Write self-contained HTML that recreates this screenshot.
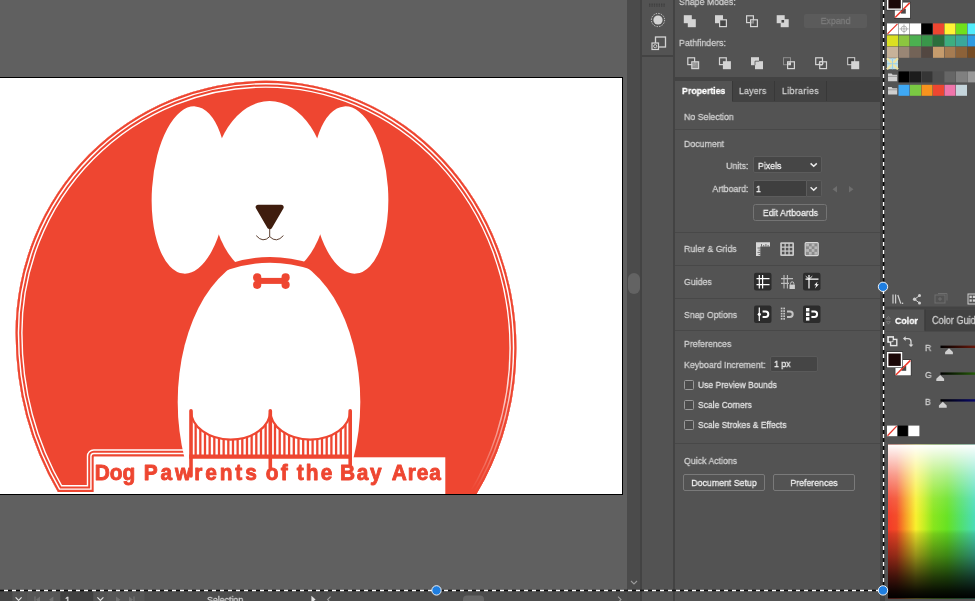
<!DOCTYPE html>
<html>
<head>
<meta charset="utf-8">
<title>Dog Pawrents of the Bay Area - Illustrator</title>
<style>
*{box-sizing:border-box;margin:0;padding:0}
html,body{width:975px;height:601px;overflow:hidden;background:#606060}
body{font-family:"Liberation Sans",sans-serif;font-size:9.6px;color:#d2d2d2;position:relative}
.abs{position:absolute}
#canvas{left:0;top:0;width:627px;height:591px;background:#606060;overflow:hidden}
#art{left:0;top:0;will-change:transform}
#vscroll{left:627px;top:0;width:13px;height:591px;background:#4b4b4b}
#vthumb{left:628px;top:273px;width:12px;height:21px;border-radius:6px;background:#636363}
#dock{left:640px;top:0;width:35px;height:601px;background:#535353;border-left:2px solid #434343;border-right:2px solid #434343}
#props{left:675px;top:0;width:205px;height:601px;background:#535353}
#gap{left:880px;top:0;width:5px;height:601px;background:#434343}
#right{left:885px;top:0;width:90px;height:601px;background:#535353;overflow:hidden}
#status{left:0;top:591px;width:640px;height:10px;background:#4d4d4d;overflow:hidden}
.t{position:absolute;white-space:nowrap;line-height:12px;will-change:transform;-webkit-text-stroke:.28px;transform:scaleX(.915);transform-origin:0 0}
.t[style*="text-align:right"]{transform-origin:100% 0}
.t[style*="text-align:center"]{transform-origin:50% 0}
.cb{left:9px;width:10px;height:10px;border:1px solid #9a9a9a;border-radius:1.5px;background:#4c4c4c}
.sep{position:absolute;left:0;width:205px;height:1px;background:#484848}
</style>
</head>
<body>
<!-- CANVAS -->
<div id="canvas" class="abs">
<svg id="art" class="abs" width="627" height="591" viewBox="0 0 627 591">
  <defs>
    <clipPath id="ab"><rect x="0" y="78" width="622" height="416"/></clipPath>
    <path id="ring" d="M 57.90 492.0 L 93.8 492.0 L 93.8 456.3 L 200 456.3 L 200 530 L 462.46 530 L 462.46 515 A 250.5 269.4 0 0 0 516.40 348 A 250.5 267.2 0 0 0 265.9 80.80 A 250.3 252 0 0 0 15.60 332.8 A 250.3 286.2 0 0 0 57.90 492.0 Z"/>
    <clipPath id="ringclip"><use href="#ring"/></clipPath>
    <linearGradient id="fade" gradientUnits="userSpaceOnUse" x1="520" y1="360" x2="470" y2="490"><stop offset="0" stop-color="#ee4631" stop-opacity="0"/><stop offset="0.55" stop-color="#ee4631" stop-opacity="0.55"/><stop offset="1" stop-color="#ee4631" stop-opacity="1"/></linearGradient>
  </defs>
  <!-- artboard -->
  <rect x="-2" y="77" width="625" height="418" fill="#000"/>
  <rect x="0" y="78" width="622" height="416" fill="#fff"/>
  <g clip-path="url(#ab)">
    <use href="#ring" fill="#ee4631"/>
    <g clip-path="url(#ringclip)" fill="none" stroke-linejoin="round">
      <use href="#ring" stroke="#fff" stroke-width="14"/>
      <use href="#ring" stroke="#ee4631" stroke-width="11.2"/>
      <use href="#ring" stroke="#fff" stroke-width="7.2"/>
      <use href="#ring" stroke="#ee4631" stroke-width="4.3"/>
      <rect x="400" y="345" width="130" height="160" fill="url(#fade)" stroke="none"/>
    </g>
    <!-- ears + head -->
    <ellipse cx="189.5" cy="190" rx="37.5" ry="83.8" fill="#fff" transform="rotate(4 189.5 190)"/>
    <ellipse cx="350" cy="190" rx="38" ry="83.8" fill="#fff" transform="rotate(-4 350 190)"/>
    <ellipse cx="269.5" cy="190" rx="58.6" ry="89" fill="#fff"/>
    <!-- body -->
    <ellipse cx="269" cy="402" rx="91.3" ry="148" fill="#fff"/>
    <!-- collar -->
    <path d="M 228 264 Q 270 250.2 312 264 L 312 269.8 Q 270 255.6 228 269.8 Z" fill="#ee4631"/>
    <!-- nose -->
    <path d="M 258.3 207.3 L 281.1 207.3 L 269.7 226.6 Z" fill="#3f1d0e" stroke="#3f1d0e" stroke-width="5.2" stroke-linejoin="round"/>
    <path d="M 269.7 228 V 236.6 M 256.2 235.6 Q 263 243.5 269.7 236.6 Q 276.4 243.5 283.4 235.6" fill="none" stroke="#4a2a1a" stroke-width="0.9"/>
    <!-- bone -->
    <g fill="#ee4631">
      <rect x="257" y="277.9" width="29" height="6"/>
      <circle cx="257.2" cy="277.4" r="4.1"/><circle cx="257.2" cy="284.8" r="4.1"/>
      <circle cx="285.6" cy="277.4" r="4.1"/><circle cx="285.6" cy="284.8" r="4.1"/>
    </g>
    <!-- text box -->
    <rect x="93.8" y="457.3" width="351.5" height="40" fill="#fff"/>
    <!-- bridge -->
    <g fill="none" stroke="#ee4631">
      <path d="M 195.66 424.46 V 456 M 200.33 429.43 V 456 M 204.99 432.81 V 456 M 209.66 435.26 V 456 M 214.32 437.06 V 456 M 218.99 438.33 V 456 M 223.65 439.15 V 456 M 228.32 439.55 V 456 M 232.98 439.55 V 456 M 237.65 439.15 V 456 M 242.31 438.33 V 456 M 246.98 437.06 V 456 M 251.64 435.26 V 456 M 256.31 432.81 V 456 M 260.97 429.43 V 456 M 265.64 424.46 V 456 M 275.00 424.46 V 456 M 279.70 429.43 V 456 M 284.40 432.81 V 456 M 289.10 435.26 V 456 M 293.80 437.06 V 456 M 298.50 438.33 V 456 M 303.20 439.15 V 456 M 307.90 439.55 V 456 M 312.60 439.55 V 456 M 317.30 439.15 V 456 M 322.00 438.33 V 456 M 326.70 437.06 V 456 M 331.40 435.26 V 456 M 336.10 432.81 V 456 M 340.80 429.43 V 456 M 345.50 424.46 V 456" stroke-width="2.3"/>
      <path d="M 191 411 A 39.65 28.6 0 0 0 270.3 411 M 270.3 411 A 39.95 28.6 0 0 0 350.2 411" stroke-width="2.2"/>
      <path d="M 191 410.7 V 476 M 270.3 410.7 V 468 M 350.2 410.7 V 465" stroke-width="3.6" stroke-linecap="round"/>
      <path d="M 189.2 456.7 H 352" stroke-width="4.2"/>
    </g>
    <!-- text -->
    <g fill="#ee4631" stroke="#ee4631" stroke-width="0.9" stroke-linejoin="round" font-family="Liberation Sans, sans-serif" font-weight="bold" font-size="22.7">
      <text transform="translate(94.80,479.7) scale(0.92,1)" letter-spacing="-0.02">Dog</text>
      <text transform="translate(143.80,479.7) scale(0.92,1)" letter-spacing="3.13">Pawrents</text>
      <text transform="translate(265.70,479.7) scale(0.92,1)" letter-spacing="2.48">of</text>
      <text transform="translate(296.80,479.7) scale(0.92,1)" letter-spacing="2.26">the</text>
      <text transform="translate(340.00,479.7) scale(0.92,1)" letter-spacing="1.83">Bay</text>
      <text transform="translate(391.70,479.7) scale(0.92,1)" letter-spacing="1.03">Area</text>
    </g>
  </g>
</svg>
</div>
<div id="vscroll" class="abs"></div>
<div id="vthumb" class="abs"></div>
<div id="dock" class="abs">
<svg class="abs" style="left:0;top:0" width="31" height="601" viewBox="0 0 31 601">
  <g fill="#3c3c3c"><rect x="7.0" y="3.6" width="1.4" height="1.2"/><rect x="9.4" y="3.6" width="1.4" height="1.2"/><rect x="11.8" y="3.6" width="1.4" height="1.2"/><rect x="14.2" y="3.6" width="1.4" height="1.2"/><rect x="16.6" y="3.6" width="1.4" height="1.2"/><rect x="19.0" y="3.6" width="1.4" height="1.2"/><rect x="21.4" y="3.6" width="1.4" height="1.2"/><rect x="7.0" y="5.4" width="1.4" height="1.2"/><rect x="9.4" y="5.4" width="1.4" height="1.2"/><rect x="11.8" y="5.4" width="1.4" height="1.2"/><rect x="14.2" y="5.4" width="1.4" height="1.2"/><rect x="16.6" y="5.4" width="1.4" height="1.2"/><rect x="19.0" y="5.4" width="1.4" height="1.2"/><rect x="21.4" y="5.4" width="1.4" height="1.2"/></g>
  <circle cx="16" cy="20" r="4.6" fill="#d4d4d4"/>
  <circle cx="16" cy="20" r="6.6" fill="none" stroke="#d4d4d4" stroke-width="1" stroke-dasharray="1.3 1.3"/>
  <rect x="13.5" y="37" width="10" height="10" fill="none" stroke="#d4d4d4" stroke-width="1.3"/>
  <rect x="10" y="43" width="6.5" height="6.5" fill="#535353" stroke="#d4d4d4" stroke-width="1.2"/>
  <circle cx="13.2" cy="46.2" r="1.6" fill="none" stroke="#d4d4d4" stroke-width="0.9"/>
  <rect x="0" y="55" width="31" height="2" fill="#434343"/>
</svg>
</div>
<div id="props" class="abs">
<div class="t" style="left:4px;top:-4px;color:#cfcfcf">Shape Modes:</div>
<div class="t" style="left:4px;top:37px;color:#cfcfcf">Pathfinders:</div>
<svg class="abs" style="left:0;top:0" width="205" height="80" viewBox="0 0 205 80"><rect x="8.80" y="15.20" width="8" height="8" fill="#d4d4d4"/><rect x="12.80" y="19.20" width="8" height="8" fill="#d4d4d4"/><rect x="40.00" y="15.20" width="8" height="8" fill="#d4d4d4"/><rect x="44.60" y="19.80" width="6.80" height="6.80" fill="#454545" stroke="#d4d4d4" stroke-width="1.2"/><rect x="71.60" y="15.80" width="6.80" height="6.80" fill="none" stroke="#d4d4d4" stroke-width="1.2"/><rect x="75.60" y="19.80" width="6.80" height="6.80" fill="none" stroke="#d4d4d4" stroke-width="1.2"/><rect x="76.2" y="20.4" width="2.8" height="2.8" fill="#8c8c8c"/><rect x="101.70" y="15.20" width="8" height="8" fill="#d4d4d4"/><rect x="105.70" y="19.20" width="8" height="8" fill="#d4d4d4"/><rect x="106.5" y="20.0" width="2.6" height="2.6" fill="#454545"/><rect x="12.80" y="57.80" width="6.80" height="6.80" fill="none" stroke="#d4d4d4" stroke-width="1.2"/><rect x="16.80" y="61.80" width="6.80" height="6.80" fill="#d4d4d4" stroke="#d4d4d4" stroke-width="1.2" fill-opacity="0.5"/><rect x="17.4" y="62.400000000000006" width="2.8" height="2.8" fill="#9c9c9c"/><rect x="44.50" y="57.80" width="6.80" height="6.80" fill="none" stroke="#d4d4d4" stroke-width="1.2"/><rect x="47.90" y="61.20" width="8" height="8" fill="#d4d4d4"/><rect x="76.00" y="57.20" width="8" height="8" fill="#d4d4d4"/><rect x="80.00" y="61.20" width="8" height="8" fill="#d4d4d4"/><path d="M 80 65.2 V 61.2 H 84" fill="none" stroke="#535353" stroke-width="0.8"/><rect x="108.50" y="57.70" width="7.00" height="7.00" fill="none" stroke="#8e8e8e" stroke-width="1"/><rect x="112.60" y="61.80" width="6.80" height="6.80" fill="none" stroke="#d4d4d4" stroke-width="1.2"/><rect x="113.2" y="62.400000000000006" width="2.8" height="2.8" fill="#d4d4d4"/><rect x="140.70" y="57.80" width="6.80" height="6.80" fill="none" stroke="#d4d4d4" stroke-width="1.2"/><rect x="144.70" y="61.80" width="6.80" height="6.80" fill="none" stroke="#d4d4d4" stroke-width="1.2"/><circle cx="146.1" cy="63.2" r="1.9" fill="none" stroke="#d4d4d4" stroke-width="1"/><rect x="172.70" y="57.70" width="7.00" height="7.00" fill="#3e3e3e" stroke="#d4d4d4" stroke-width="1"/><rect x="176.20" y="61.20" width="8" height="8" fill="#d4d4d4"/></svg>
<div class="abs" style="left:129px;top:14px;width:63px;height:14px;background:#5b5b5b;border-radius:2px"></div>
<div class="t" style="left:129px;top:15px;width:63px;text-align:center;color:#7d7d7d">Expand</div>
<div class="abs" style="left:0;top:77px;width:205px;height:4px;background:#434343"></div>
<div class="abs" style="left:0;top:81px;width:205px;height:21px;background:#424242"></div>
<div class="abs" style="left:0;top:81px;width:57px;height:21px;background:#535353"></div>
<div class="abs" style="left:57px;top:81px;width:1px;height:20px;background:#383838"></div>
<div class="abs" style="left:99px;top:81px;width:1px;height:20px;background:#383838"></div>
<div class="abs" style="left:151px;top:81px;width:1px;height:20px;background:#383838"></div>
<div class="t" style="left:7px;top:85px;color:#fff;font-weight:bold">Properties</div>
<div class="t" style="left:64px;top:85px;color:#cdcdcd;letter-spacing:.2px">Layers</div>
<div class="t" style="left:107px;top:85px;color:#cdcdcd;letter-spacing:.4px">Libraries</div>

<div class="t" style="left:8.5px;top:110.5px">No Selection</div>
<div class="sep" style="top:129px"></div>
<div class="t" style="left:8.5px;top:137.5px">Document</div>
<div class="t" style="left:20px;width:53.5px;text-align:right;top:159.5px">Units:</div>
<div class="abs" style="left:77.8px;top:156.4px;width:68.8px;height:17px;background:#464646;border:1px solid #5c5c5c;border-radius:2px"></div>
<div class="t" style="left:82.6px;top:159.5px;color:#f4f4f4">Pixels</div>
<div class="t" style="left:20px;width:53.5px;text-align:right;top:183px">Artboard:</div>
<div class="abs" style="left:77.8px;top:180.4px;width:54.2px;height:16.6px;background:#3f3f3f;border:1px solid #5c5c5c;border-radius:2px 0 0 2px"></div>
<div class="abs" style="left:131.5px;top:180.4px;width:15.1px;height:16.6px;background:#4a4a4a;border:1px solid #5c5c5c;border-left:none;border-radius:0 2px 2px 0"></div>
<div class="t" style="left:81.4px;top:183px;color:#f4f4f4">1</div>
<div class="abs" style="left:77.8px;top:204px;width:73.8px;height:17px;border:1px solid #747474;border-radius:2.5px"></div>
<div class="t" style="left:78.5px;width:73px;text-align:center;top:206.5px;color:#f0f0f0">Edit Artboards</div>
<div class="sep" style="top:232px"></div>
<div class="t" style="left:8.5px;top:243px">Ruler &amp; Grids</div>
<div class="sep" style="top:265px"></div>
<div class="t" style="left:8.5px;top:275.5px">Guides</div>
<div class="sep" style="top:298px"></div>
<div class="t" style="left:8.5px;top:308.5px">Snap Options</div>
<div class="sep" style="top:330px"></div>
<div class="t" style="left:8.5px;top:338px">Preferences</div>
<div class="t" style="left:8.5px;top:359px">Keyboard Increment:</div>
<div class="abs" style="left:94.7px;top:356px;width:48px;height:16px;background:#454545;border:1px solid #5a5a5a;border-radius:2px"></div>
<div class="t" style="left:98.5px;top:358px;color:#f0f0f0">1 px</div>
<div class="abs cb" style="top:380px"></div><div class="t" style="left:23px;top:379px;color:#e2e2e2;transform:scaleX(.885)">Use Preview Bounds</div>
<div class="abs cb" style="top:400px"></div><div class="t" style="left:23px;top:398.5px;color:#e2e2e2;transform:scaleX(.885)">Scale Corners</div>
<div class="abs cb" style="top:419.5px"></div><div class="t" style="left:23px;top:418.5px;color:#e2e2e2;transform:scaleX(.885)">Scale Strokes &amp; Effects</div>
<div class="sep" style="top:443px"></div>
<div class="t" style="left:8.5px;top:454.5px">Quick Actions</div>
<div class="abs" style="left:8px;top:474px;width:82px;height:17px;border:1px solid #7a7a7a;border-radius:2px"></div>
<div class="t" style="left:8px;width:82px;text-align:center;top:476.5px;color:#f0f0f0">Document Setup</div>
<div class="abs" style="left:98.3px;top:474px;width:82px;height:17px;border:1px solid #7a7a7a;border-radius:2px"></div>
<div class="t" style="left:98.3px;width:82px;text-align:center;top:476.5px;color:#f0f0f0">Preferences</div>
<svg id="picons" class="abs" style="left:0;top:0" width="205" height="601" viewBox="0 0 205 601"><path d="M 135.6 163.4 l 3.1 2.9 l 3.1 -2.9" fill="none" stroke="#ececec" stroke-width="1.5"/><path d="M 135.6 187.3 l 3.1 2.9 l 3.1 -2.9" fill="none" stroke="#ececec" stroke-width="1.5"/><path d="M 162 186 l -4.5 3.2 l 4.5 3.2 Z" fill="#6e6e6e"/><path d="M 174 186 l 4.5 3.2 l -4.5 3.2 Z" fill="#6e6e6e"/><path d="M 81 242.3 H 95 V 246.6 H 85.3 V 256 H 81 Z" fill="#d8d8d8"/><g stroke="#535353" stroke-width="0.8"><path d="M 86.5 244 v 2.6 M 88.7 245 v 1.6 M 90.9 244 v 2.6 M 93.1 245 v 1.6 M 82.5 248 h 2.8 M 83.5 250.2 h 1.8 M 82.5 252.4 h 2.8 M 83.5 254.6 h 1.8"/></g><rect x="105.2" y="242.2" width="13.8" height="13.8" rx="1.2" fill="#c9c9c9"/><rect x="106.90" y="243.90" width="2.6" height="2.6" fill="#505050"/><rect x="106.90" y="247.80" width="2.6" height="2.6" fill="#505050"/><rect x="106.90" y="251.70" width="2.6" height="2.6" fill="#505050"/><rect x="110.80" y="243.90" width="2.6" height="2.6" fill="#505050"/><rect x="110.80" y="247.80" width="2.6" height="2.6" fill="#505050"/><rect x="110.80" y="251.70" width="2.6" height="2.6" fill="#505050"/><rect x="114.70" y="243.90" width="2.6" height="2.6" fill="#505050"/><rect x="114.70" y="247.80" width="2.6" height="2.6" fill="#505050"/><rect x="114.70" y="251.70" width="2.6" height="2.6" fill="#505050"/><rect x="130.2" y="242.6" width="13" height="13" fill="#8b8b8b" stroke="#d8d8d8" stroke-width="1.2" rx="1"/><rect x="131.20" y="243.60" width="2.75" height="2.75" fill="#b9b9b9"/><rect x="131.20" y="249.10" width="2.75" height="2.75" fill="#b9b9b9"/><rect x="133.95" y="246.35" width="2.75" height="2.75" fill="#b9b9b9"/><rect x="133.95" y="251.85" width="2.75" height="2.75" fill="#b9b9b9"/><rect x="136.70" y="243.60" width="2.75" height="2.75" fill="#b9b9b9"/><rect x="136.70" y="249.10" width="2.75" height="2.75" fill="#b9b9b9"/><rect x="139.45" y="246.35" width="2.75" height="2.75" fill="#b9b9b9"/><rect x="139.45" y="251.85" width="2.75" height="2.75" fill="#b9b9b9"/><rect x="79" y="272.8" width="17.5" height="17.6" rx="2" fill="#2c2c2c"/><path d="M 84.3 275 v 13.5 M 87.6 275 v 13.5" stroke="#fff" stroke-width="1.2"/><path d="M 81.5 278.6 h 13 M 81.5 284.6 h 13" stroke="#fff" stroke-width="1.2"/><path d="M 109 275 v 13.5 M 112.4 275 v 13.5 M 106 278.6 h 12 M 106 283.4 h 8" stroke="#bdbdbd" stroke-width="1.1"/><rect x="114.5" y="284.6" width="5.4" height="4.4" fill="#d0d0d0"/><path d="M 115.6 284.6 v -1.2 a 1.6 1.6 0 0 1 3.2 0 v 1.2" fill="none" stroke="#d0d0d0" stroke-width="0.9"/><rect x="128" y="272.8" width="17.5" height="17.6" rx="2" fill="#2c2c2c"/><path d="M 134 275 v 13.5 M 130.5 279.2 h 13" stroke="#fff" stroke-width="1.2"/><path d="M 130.7 276.2 l 3.3 3 M 137.3 276.2 l -3.3 3" stroke="#fff" stroke-width="0.9"/><path d="M 142.6 281.6 l -3.4 3.6 h 2 l -1.2 3.4 l 3.8 -4.4 h -2.2 Z" fill="#fff"/><rect x="79" y="305.5" width="17.5" height="17.6" rx="2" fill="#2c2c2c"/><path d="M 84.3 307.5 v 13.5" stroke="#fff" stroke-width="1.2"/><circle cx="84.3" cy="314.3" r="1.6" fill="#fff"/><path d="M 87.6 311.6 h 3 a 2.7 2.7 0 0 1 0 5.4 h -3" fill="none" stroke="#fff" stroke-width="2"/><g fill="#c4c4c4"><rect x="105.8" y="307.6" width="1.7" height="1.7"/><rect x="108.3" y="307.6" width="1.7" height="1.7"/><rect x="105.8" y="310.2" width="1.7" height="1.7"/><rect x="108.3" y="310.2" width="1.7" height="1.7"/><rect x="105.8" y="312.8" width="1.7" height="1.7"/><rect x="108.3" y="312.8" width="1.7" height="1.7"/><rect x="105.8" y="315.4" width="1.7" height="1.7"/><rect x="108.3" y="315.4" width="1.7" height="1.7"/><rect x="105.8" y="318" width="1.7" height="1.7"/><rect x="108.3" y="318" width="1.7" height="1.7"/></g><path d="M 112 311.6 h 3 a 2.7 2.7 0 0 1 0 5.4 h -3" fill="none" stroke="#c4c4c4" stroke-width="2"/><rect x="128" y="305.5" width="17.5" height="17.6" rx="2" fill="#2c2c2c"/><rect x="131" y="308" width="3.4" height="3.4" fill="#fff"/><rect x="131" y="312.6" width="3.4" height="3.4" fill="#fff"/><rect x="131" y="317.2" width="3.4" height="3.4" fill="#fff"/><path d="M 136.4 311.6 h 3 a 2.7 2.7 0 0 1 0 5.4 h -3" fill="none" stroke="#fff" stroke-width="2"/></svg>
</div>
<div id="gap" class="abs"></div>
<div id="right" class="abs">
<svg class="abs" style="left:0;top:0" width="90" height="601" viewBox="0 0 90 601"><rect x="9" y="1.8" width="16.8" height="16.8" fill="#2e2e2e"/><rect x="9.7" y="2.5" width="15.4" height="15.4" fill="#fff"/><rect x="16" y="8.8" width="4.8" height="4.8" fill="#4a4a4a"/><path d="M 10.1 17.5 L 24.7 2.9" stroke="#ee3a2c" stroke-width="1.5"/><rect x="1.3" y="-6" width="16.6" height="16.4" fill="#2e2e2e"/><rect x="1.9" y="-6" width="15.4" height="15.8" fill="#fff"/><rect x="3.4" y="-6" width="12.4" height="14.5" fill="#1b0808"/><rect x="2.0" y="23.4" width="11" height="11" fill="#fff"/><path d="M 2.5 33.9 L 12.5 23.9" stroke="#e8352a" stroke-width="1.3"/><rect x="13.5" y="23.4" width="11" height="11" fill="#fff"/><circle cx="19.0" cy="28.9" r="2.8" fill="none" stroke="#999" stroke-width="0.7"/><path d="M 19.0 24.4 v 9 M 14.5 28.9 h 9" stroke="#999" stroke-width="0.7"/><rect x="25.0" y="23.4" width="11" height="11" fill="#ffffff"/><rect x="36.5" y="23.4" width="11" height="11" fill="#000000"/><rect x="48.0" y="23.4" width="11" height="11" fill="#ee4631"/><rect x="59.5" y="23.4" width="11" height="11" fill="#fff335"/><rect x="71.0" y="23.4" width="11" height="11" fill="#70e01c"/><rect x="82.5" y="23.4" width="11" height="11" fill="#52ecfb"/><rect x="2.0" y="35.4" width="11" height="11" fill="#dbe021"/><rect x="13.5" y="35.4" width="11" height="11" fill="#8cc63f"/><rect x="25.0" y="35.4" width="11" height="11" fill="#4cb050"/><rect x="36.5" y="35.4" width="11" height="11" fill="#39964a"/><rect x="48.0" y="35.4" width="11" height="11" fill="#2b6e3c"/><rect x="59.5" y="35.4" width="11" height="11" fill="#3dae80"/><rect x="71.0" y="35.4" width="11" height="11" fill="#3aa79b"/><rect x="82.5" y="35.4" width="11" height="11" fill="#2e9be2"/><rect x="2.0" y="46.8" width="11" height="11" fill="#c7b299"/><rect x="13.5" y="46.8" width="11" height="11" fill="#998675"/><rect x="25.0" y="46.8" width="11" height="11" fill="#736357"/><rect x="36.5" y="46.8" width="11" height="11" fill="#534741"/><rect x="48.0" y="46.8" width="11" height="11" fill="#c69c6d"/><rect x="59.5" y="46.8" width="11" height="11" fill="#a67c52"/><rect x="71.0" y="46.8" width="11" height="11" fill="#8c6239"/><rect x="82.5" y="46.8" width="11" height="11" fill="#754c24"/><rect x="2.0" y="58.2" width="11" height="11" fill="#bfe0ea"/><path d="M 2.0 58.2 l 11 11 M 13.0 58.2 l -11 11" stroke="#efe3a0" stroke-width="2.2"/><path d="M 7.5 58.2 v 11 M 2.0 63.7 h 11" stroke="#9fd0e2" stroke-width="1"/><path d="M 3.0 73.60000000000001 h 3.6 l 1 1.2 h 4.6 v 6.4 h -9.2 Z" fill="#cfcfcf"/><path d="M 3.0 76.4 h 9.2" stroke="#8a8a8a" stroke-width="0.7"/><rect x="13.5" y="71.4" width="11" height="11" fill="#000000"/><rect x="25.0" y="71.4" width="11" height="11" fill="#1c1c1c"/><rect x="36.5" y="71.4" width="11" height="11" fill="#363636"/><rect x="48.0" y="71.4" width="11" height="11" fill="#4f4f4f"/><rect x="59.5" y="71.4" width="11" height="11" fill="#666666"/><rect x="71.0" y="71.4" width="11" height="11" fill="#808080"/><rect x="82.5" y="71.4" width="11" height="11" fill="#999999"/><path d="M 3.0 87.0 h 3.6 l 1 1.2 h 4.6 v 6.4 h -9.2 Z" fill="#cfcfcf"/><path d="M 3.0 89.8 h 9.2" stroke="#8a8a8a" stroke-width="0.7"/><rect x="13.5" y="84.8" width="11" height="11" fill="#3fa9f5"/><rect x="25.0" y="84.8" width="11" height="11" fill="#7ac943"/><rect x="36.5" y="84.8" width="11" height="11" fill="#f7931e"/><rect x="48.0" y="84.8" width="11" height="11" fill="#ee4631"/><rect x="59.5" y="84.8" width="11" height="11" fill="#f075ab"/><rect x="71.0" y="84.8" width="11" height="11" fill="#c5d5dc"/><g stroke="#cfcfcf" fill="none" stroke-width="1.2"><path d="M 8 294.5 v 9 M 10.6 294.5 v 9 M 12.8 295 l 3 8.5"/></g><rect x="16.8" y="302.6" width="1.4" height="1.4" fill="#cfcfcf"/><g fill="#cfcfcf"><circle cx="29.6" cy="299.3" r="1.7"/><circle cx="34.5" cy="295.6" r="1.5"/><circle cx="34.5" cy="303" r="1.5"/></g><path d="M 34.5 295.6 L 29.6 299.3 L 34.5 303" fill="none" stroke="#cfcfcf" stroke-width="1"/><g stroke="#6f6f6f" fill="none" stroke-width="1"><rect x="50" y="295" width="10" height="8"/><path d="M 53 293.5 h 9 v 7"/><path d="M 55 297 v 4 M 53 299 h 4"/></g><g fill="#cfcfcf"><rect x="83" y="294" width="9" height="10" fill="none" stroke="#cfcfcf" stroke-width="1"/><rect x="84.5" y="295.7" width="2.3" height="2.3"/><rect x="87.8" y="295.7" width="2.3" height="2.3"/><rect x="84.5" y="299.4" width="2.3" height="2.3"/><rect x="87.8" y="299.4" width="2.3" height="2.3"/></g><rect x="0" y="306.6" width="90" height="3" fill="#434343"/><rect x="0" y="309.5" width="90" height="22" fill="#424242"/><rect x="0" y="309.5" width="39.5" height="22" fill="#535353"/><rect x="39.5" y="309.5" width="1" height="21" fill="#383838"/><path d="M 1.4 319 l 2 -2.6 l 2 2.6 Z M 1.4 321.6 l 2 2.6 l 2 -2.6 Z" fill="none" stroke="#808080" stroke-width="0.7"/><rect x="2.6" y="336.4" width="6" height="6" fill="#fff" stroke="#d8d8d8" stroke-width="0.8"/><rect x="5.6" y="339.4" width="6.2" height="6.2" fill="#535353" stroke="#e6e6e6" stroke-width="1.4"/><rect x="3.4" y="337.2" width="4.6" height="4.6" fill="#535353" stroke="#fff" stroke-width="0.6"/><path d="M 20 338.6 h 3 a 3 3 0 0 1 3 3 v 3.6" fill="none" stroke="#d8d8d8" stroke-width="1.3"/><path d="M 20.6 336.2 l -2.6 2.4 l 2.6 2.4 Z" fill="#d8d8d8"/><path d="M 23.6 344.4 l 2.4 2.6 l 2.4 -2.6 Z" fill="#d8d8d8"/><rect x="9.8" y="359.4" width="16.6" height="16.6" fill="#2e2e2e"/><rect x="10.4" y="360" width="15.4" height="15.4" fill="#fff"/><rect x="16.4" y="366" width="4.8" height="4.8" fill="#4a4a4a"/><path d="M 10.8 375 L 25.4 360.4" stroke="#ee3a2c" stroke-width="1.5"/><rect x="1.3" y="351.4" width="16.6" height="16.6" fill="#2e2e2e"/><rect x="1.9" y="352" width="15.4" height="15.4" fill="#fff"/><rect x="3.4" y="353.5" width="12.4" height="12.4" fill="#1b0808"/><defs><linearGradient id="gr" x1="0" x2="1"><stop offset="0" stop-color="#000"/><stop offset="1" stop-color="#7a1c0c"/></linearGradient><linearGradient id="gg" x1="0" x2="1"><stop offset="0" stop-color="#000"/><stop offset="1" stop-color="#2a6a08"/></linearGradient><linearGradient id="gb" x1="0" x2="1"><stop offset="0" stop-color="#000"/><stop offset="1" stop-color="#0a0a7a"/></linearGradient></defs><rect x="55.5" y="345.6" width="40" height="2.4" fill="url(#gr)"/><path d="M 64.0 348.2 l 3.9 3.8 v 2.2 h -7.8 v -2.2 Z" fill="#cfcfcf"/><rect x="55.5" y="372.4" width="40" height="2.4" fill="url(#gg)"/><path d="M 55.2 375.0 l 3.9 3.8 v 2.2 h -7.8 v -2.2 Z" fill="#cfcfcf"/><rect x="55.5" y="399.2" width="40" height="2.4" fill="url(#gb)"/><path d="M 57.8 401.8 l 3.9 3.8 v 2.2 h -7.8 v -2.2 Z" fill="#cfcfcf"/><rect x="2" y="425.6" width="10.2" height="10.6" fill="#fff"/><path d="M 2.5 435.7 L 11.7 426.1" stroke="#e8352a" stroke-width="1.3"/><rect x="12.8" y="425.6" width="10" height="10.6" fill="#000"/><rect x="23.4" y="425.6" width="11" height="10.6" fill="#fff"/><defs><linearGradient id="hue" x1="0" x2="1"><stop offset="0" stop-color="#f43a28"/><stop offset="0.1" stop-color="#f44a26"/><stop offset="0.2" stop-color="#f79a24"/><stop offset="0.32" stop-color="#f9f02c"/><stop offset="0.42" stop-color="#c4ee22"/><stop offset="0.52" stop-color="#88e61c"/><stop offset="0.68" stop-color="#66e222"/><stop offset="0.84" stop-color="#50e070"/><stop offset="1" stop-color="#48dcb8"/></linearGradient>
<linearGradient id="wb" x1="0" x2="0" y1="0" y2="1"><stop offset="0" stop-color="#fff" stop-opacity="1"/><stop offset="0.04" stop-color="#fff" stop-opacity="0.88"/><stop offset="0.2" stop-color="#fff" stop-opacity="0.46"/><stop offset="0.35" stop-color="#fff" stop-opacity="0.13"/><stop offset="0.46" stop-color="#fff" stop-opacity="0.02"/><stop offset="0.55" stop-color="#fff" stop-opacity="0"/><stop offset="0.55" stop-color="#000" stop-opacity="0"/><stop offset="0.58" stop-color="#000" stop-opacity="0.12"/><stop offset="0.72" stop-color="#000" stop-opacity="0.4"/><stop offset="0.86" stop-color="#000" stop-opacity="0.74"/><stop offset="0.95" stop-color="#000" stop-opacity="0.93"/><stop offset="1" stop-color="#000" stop-opacity="1"/></linearGradient></defs>
<rect x="3" y="444.6" width="87" height="154" fill="url(#hue)"/><rect x="3" y="444.6" width="87" height="154" fill="url(#wb)"/></svg>
<div class="t" style="left:9.8px;top:314.5px;color:#fff;font-weight:bold">Color</div>
<div class="t" style="left:46.5px;top:314.5px;color:#d0d0d0;font-size:10px">Color Guide</div>
<div class="t" style="left:40px;top:341.5px;color:#cfcfcf;font-size:9.5px">R</div>
<div class="t" style="left:40px;top:368.5px;color:#cfcfcf;font-size:9.5px">G</div>
<div class="t" style="left:40px;top:395.5px;color:#cfcfcf;font-size:9.5px">B</div>
</div>
<div id="status" class="abs">
<svg class="abs" style="left:0;top:0" width="640" height="10" viewBox="0 0 640 10">
<rect x="26.5" y="0" width="118" height="10" fill="#565656"/><rect x="0" y="0" width="12.5" height="10" fill="#464646"/><rect x="12.5" y="0" width="14" height="10" fill="#535353"/>
<path d="M 15.6 6.4 l 3 3 l 3 -3" fill="none" stroke="#e0e0e0" stroke-width="1.2"/>
<rect x="60.3" y="0" width="33.2" height="10" fill="#404040"/><rect x="93.5" y="0" width="13.5" height="10" fill="#535353"/>
<path d="M 97.4 6.4 l 3 3 l 3 -3" fill="none" stroke="#e0e0e0" stroke-width="1.2"/>
<g fill="#727272"><rect x="34.4" y="5.4" width="1.2" height="6"/><path d="M 40 5.4 l -4 3.4 l 4 3.4 Z"/><path d="M 53.4 5.4 l -4.4 3.4 l 4.4 3.4 Z"/>
<path d="M 116 5.4 l 4.4 3.4 l -4.4 3.4 Z"/><path d="M 129 5.4 l 4 3.4 l -4 3.4 Z"/><rect x="133.4" y="5.4" width="1.2" height="6"/></g>
<path d="M 311.4 4.8 l 4.2 3.6 l -4.2 3.6 Z" fill="#e0e0e0"/>
<path d="M 330.6 5.6 l -3 3 l 3 3" fill="none" stroke="#9a9a9a" stroke-width="1.1"/>
<path d="M 618 5.6 l 3 3 l -3 3" fill="none" stroke="#9a9a9a" stroke-width="1.1"/>
<rect x="463" y="4.4" width="21" height="9" rx="4" fill="#666"/>
<rect x="627" y="0" width="13" height="10" fill="#4b4b4b"/>
</svg>
<div class="t" style="left:64.5px;top:3px;color:#f0f0f0">1</div>
<div class="t" style="left:207px;top:3px;color:#d0d0d0">Selection</div>
</div>
<svg id="marq" class="abs" style="left:0;top:0;pointer-events:none" width="975" height="601" viewBox="0 0 975 601">
<path d="M 631 581 l 3 3 l 3 -3" fill="none" stroke="#9a9a9a" stroke-width="1.1"/>
<path d="M 0 590.5 H 884.2 M 883.55 0 V 591.2" fill="none" stroke="#0a0a0a" stroke-width="1.4"/>
<path d="M 0 590.5 H 883" fill="none" stroke="#fff" stroke-width="1.4" stroke-dasharray="4 4" stroke-dashoffset="4"/>
<path d="M 883.55 0 V 590" fill="none" stroke="#fff" stroke-width="1.4" stroke-dasharray="4 4" stroke-dashoffset="6"/>
<g fill="#1f7ee0" stroke="#fff" stroke-width="0.9"><circle cx="883" cy="286.8" r="4.7"/><circle cx="436.5" cy="590.4" r="4.7"/><circle cx="883" cy="590.4" r="4.7"/></g>
</svg>
</body>
</html>
